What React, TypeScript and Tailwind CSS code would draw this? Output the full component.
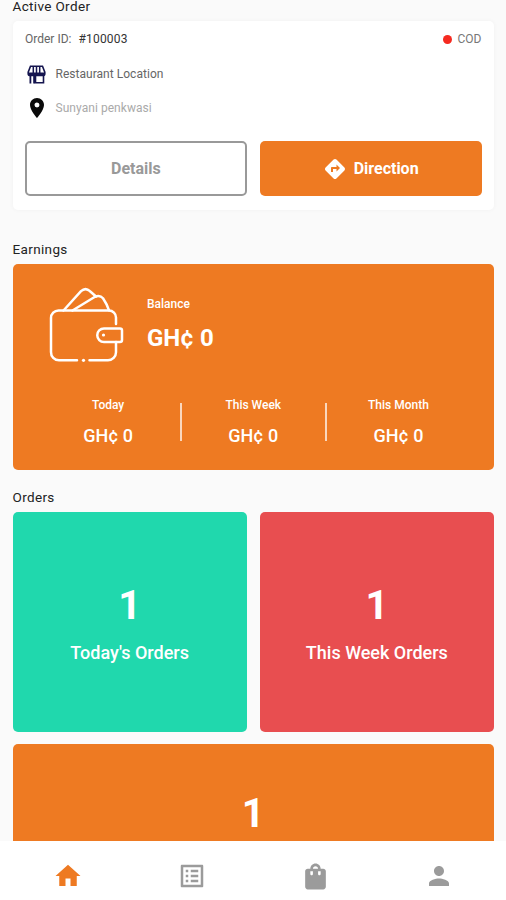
import React from 'react';
import { MdDirections, MdHome, MdListAlt, MdLocationOn, MdPerson, MdShoppingBag } from 'react-icons/md';

const earnings = [
  { label: 'Today', amount: 'GH¢ 0' },
  { label: 'This Week', amount: 'GH¢ 0' },
  { label: 'This Month', amount: 'GH¢ 0' },
];

const StoreIcon: React.FC = () => (
  <svg width="19" height="19" viewBox="0 0 19 19" fill="none" stroke="#15154f">
    <path d="M3.500 1.200h12l2.300 6v1.500c0 1.200-1 1.800-2.200 1.800H3.400C2.200 10.500 1.200 9.900 1.200 8.700V7.200z" strokeWidth="1.600" />
    <path d="M1.500 8.800h16" strokeWidth="2.600" />
    <path d="M6.300 1v8M12.700 1v8M9.500 1v8" strokeWidth="1.500" />
    <path d="M2.500 10h1.800v8.500H2.500zM6.200 10H8v8.500H6.200z" fill="#15154f" stroke="none" />
    <path d="M8.500 11v6.700h8V10" strokeWidth="1.600" />
  </svg>
);

const WalletIcon: React.FC = () => (
  <svg width="76" height="78" viewBox="0 0 76 78" fill="none" stroke="#fff" strokeWidth="2.500" strokeLinecap="round" strokeLinejoin="round">
    <path d="M67 38V31.500a7 7 0 0 0-7-7H9.500a7.500 7.500 0 0 0-7.500 7.500v34A8 8 0 0 0 10 74.300h18" />
    <path d="M67 56v10.300a8 8 0 0 1-8 8H40.500" />
    <path d="M73 44.500v9.500a2 2 0 0 1-2 2H55a6.500 6.500 0 0 1 0-13.500H71a2 2 0 0 1 2 2z" />
    <path d="M14.500 24.500 32 5.200q4.500-4.200 9 0l6 5.300" />
    <path d="M23.500 24.500 46 10.800q5-2 8 1.500 4 6 6 12" />
    <circle cx="34.500" cy="74.300" r="1.600" fill="#fff" stroke="none" />
    <circle cx="54.500" cy="49" r="1.600" fill="#fff" stroke="none" />
  </svg>
);

const OrderCard: React.FC<{ count: number; label?: string; className: string }> = ({ count, label, className }) => (
  <div className={`rounded-[5px] flex flex-col items-center text-white ${className}`}>
    <span className="text-[40px] leading-[50px] font-bold">{count}</span>
    {label && <span className="mt-[11px] text-[18px] leading-[22px] font-medium">{label}</span>}
  </div>
);

const App: React.FC = () => {
  return (
    <div className="w-[506px] h-[900px] overflow-hidden flex flex-col bg-[#fafafa] font-['Roboto',sans-serif]">
      <main className="flex-1 min-h-0 overflow-hidden pl-[12.5px] pr-[12px]">
        {/* Active order */}
        <h2 className="h-[21px] text-[13.500px] leading-[12px] text-[#222] tracking-[0.35px]">Active Order</h2>
        <section className="h-[189px] rounded-[5px] bg-white px-[12.5px] pt-[10px] shadow-[0_0_5px_rgba(0,0,0,0.04)]">
          <div className="flex justify-between items-center h-4 text-[12px]">
            <div className="flex gap-[7px]">
              <span className="text-[#666]">Order ID:</span>
              <span className="text-[#333] tracking-[0.2px]">#100003</span>
            </div>
            <div className="flex items-center gap-[6px]">
              <span className="w-[9px] h-[9px] rounded-full bg-[#f52a20]" />
              <span className="text-[#777]">COD</span>
            </div>
          </div>
          <div className="flex items-center mt-[17px] pl-[2px] h-5 gap-[9.5px]">
            <StoreIcon />
            <span className="text-[12px] text-[#666] tracking-[0.03px]">Restaurant Location</span>
          </div>
          <div className="flex items-center mt-[14px] h-5 gap-[6.5px]">
            <MdLocationOn size={24} color="#0a0a0a" />
            <span className="text-[12px] text-[#aaa] tracking-[0.05px]">Sunyani penkwasi</span>
          </div>
          <div className="grid grid-cols-2 gap-[13px] mt-[23px]">
            <button className="h-[55px] rounded-[5px] border-2 border-[#999] text-[16px] font-bold text-[#999]">Details</button>
            <button className="h-[55px] rounded-[5px] bg-[#ee7a22] text-white text-[16px] font-bold flex items-center justify-center gap-[7px]">
              <MdDirections size={24} />
              Direction
            </button>
          </div>
        </section>

        {/* Earnings */}
        <h2 className="mt-[32px] h-[22px] text-[13.500px] leading-[15px] text-[#222] tracking-[0.35px]">Earnings</h2>
        <section className="h-[206px] rounded-[5px] bg-[#ee7a22] text-white">
          <div className="flex pt-[22px] pl-[36px] h-[129px]">
            <WalletIcon />
            <div className="ml-[22.5px] pt-[10px]">
              <div className="text-[12px] leading-[16px] font-medium">Balance</div>
              <div className="mt-[11px] text-[24px] leading-[30px] font-bold">GH¢ 0</div>
            </div>
          </div>
          <div className="flex px-[24px]">
            {earnings.map((item, index) => (
              <React.Fragment key={item.label}>
                {index > 0 && <div className="mt-[10px] w-[2px] h-[38px] bg-white/70" />}
                <div className="flex-1 flex flex-col items-center pt-[4px]">
                  <span className="text-[12px] leading-[16px] font-medium">{item.label}</span>
                  <span className="mt-[12px] text-[18px] leading-[22px] font-medium">{item.amount}</span>
                </div>
              </React.Fragment>
            ))}
          </div>
        </section>

        {/* Orders */}
        <h2 className="mt-[20px] h-[22px] text-[13.500px] leading-[15px] text-[#222] tracking-[0.35px]">Orders</h2>
        <section className="grid grid-cols-2 gap-x-[13px] gap-y-[12px]">
          <OrderCard count={1} label="Today's Orders" className="h-[220px] pt-[69px] bg-[#20d8ad]" />
          <OrderCard count={1} label="This Week Orders" className="h-[220px] pt-[69px] bg-[#e84e50]" />
          <OrderCard count={1} className="h-[180px] pt-[45px] col-span-2 bg-[#ee7a22]" />
        </section>
      </main>

      {/* Bottom navigation */}
      <nav className="h-[59px] shrink-0 bg-white grid grid-cols-4 pl-[6px] pr-[5px] pt-[20px] text-[#9b9b9b]">
        <div className="flex justify-center"><MdHome size={30} color="#ee7a22" /></div>
        <div className="flex justify-center"><MdListAlt size={30} /></div>
        <div className="flex justify-center"><MdShoppingBag size={31} /></div>
        <div className="flex justify-center"><MdPerson size={30} /></div>
      </nav>
    </div>
  );
};

export default App;
